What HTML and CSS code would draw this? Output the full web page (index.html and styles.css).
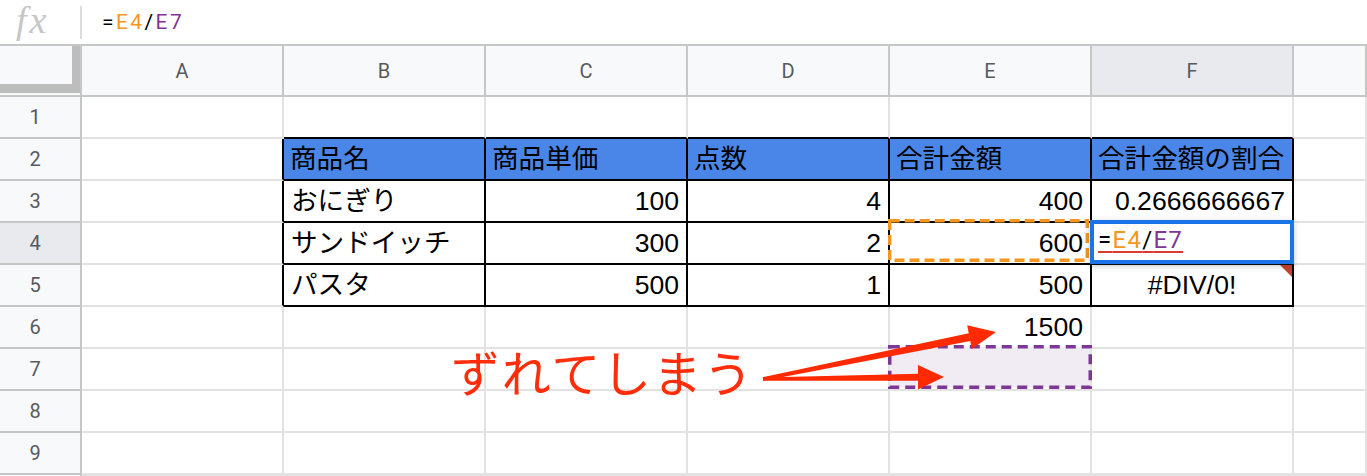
FILE: index.html
```html
<!DOCTYPE html>
<html lang="ja">
<head>
<meta charset="utf-8">
<title>Sheet</title>
<link rel="stylesheet" href="styles.css">
</head>
<body>
<div class="formula-bar">
  <span class="fx">fx</span>
  <span class="sep"></span>
  <span class="formula">=<span class="ref-a">E4</span>/<span class="ref-b">E7</span></span>
</div>
<div class="sheet">
  <div class="corner"><div class="freeze"></div></div>
  <div class="ch">A</div><div class="ch">B</div><div class="ch">C</div><div class="ch">D</div><div class="ch">E</div><div class="ch ch-sel">F</div><div class="ch"></div>

  <div class="rh">1</div>
  <div class="c"></div><div class="c bb"></div><div class="c bb"></div><div class="c bb"></div><div class="c bb"></div><div class="c bb"></div><div class="c"></div>

  <div class="rh">2</div>
  <div class="c br"></div>
  <div class="c t blue">商品名</div><div class="c t blue">商品単価</div><div class="c t blue">点数</div><div class="c t blue">合計金額</div><div class="c t blue">合計金額の割合</div>
  <div class="c"></div>

  <div class="rh">3</div>
  <div class="c br"></div>
  <div class="c t">おにぎり</div><div class="c t num">100</div><div class="c t num">4</div><div class="c t num">400</div><div class="c t num">0.2666666667</div>
  <div class="c"></div>

  <div class="rh rh-sel">4</div>
  <div class="c br"></div>
  <div class="c t">サンドイッチ</div><div class="c t num">300</div><div class="c t num">2</div><div class="c t num">600</div><div class="c t"></div>
  <div class="c"></div>

  <div class="rh">5</div>
  <div class="c br"></div>
  <div class="c t">パスタ</div><div class="c t num">500</div><div class="c t num">1</div><div class="c t num">500</div><div class="c t ctr err-cell">#DIV/0!<span class="err"></span></div>
  <div class="c"></div>

  <div class="rh">6</div>
  <div class="c"></div><div class="c"></div><div class="c"></div><div class="c"></div><div class="c num">1500</div><div class="c"></div><div class="c"></div>

  <div class="rh">7</div>
  <div class="c"></div><div class="c"></div><div class="c"></div><div class="c"></div><div class="c"></div><div class="c"></div><div class="c"></div>

  <div class="rh">8</div>
  <div class="c"></div><div class="c"></div><div class="c"></div><div class="c"></div><div class="c"></div><div class="c"></div><div class="c"></div>

  <div class="rh">9</div>
  <div class="c"></div><div class="c"></div><div class="c"></div><div class="c"></div><div class="c"></div><div class="c"></div><div class="c"></div>

  <div class="rh rh-cut"></div>
  <div class="c"></div><div class="c"></div><div class="c"></div><div class="c"></div><div class="c"></div><div class="c"></div><div class="c"></div>

  <svg class="sel-orange" width="201" height="43" viewBox="0 0 201 43">
    <rect x="1.7" y="1.7" width="197.6" height="39.6" fill="none" stroke="#f6961e" stroke-width="3.4" stroke-dasharray="10 5"/>
  </svg>
  <svg class="sel-purple" width="204" height="44" viewBox="0 0 204 44">
    <rect x="1.75" y="1.75" width="200.5" height="40.5" fill="#f1ecf4" stroke="#7e3794" stroke-width="3.5" stroke-dasharray="10 6"/>
  </svg>
  <div class="editor"><span class="edit-text">=<span class="ref-a">E4</span>/<span class="ref-b">E7</span></span></div>

  <div class="note">ずれてしまう</div>
  <svg class="arrows" width="1367" height="430" viewBox="0 46 1367 430">
    <polygon points="762.6,377.2 968.8,333.3 970.4,341.1 763.4,380.8" fill="#ff2a00"/>
    <polygon points="996,332 967.2,325.2 971.8,349" fill="#ff2a00"/>
    <polygon points="763,377.4 919,373.8 919,380.8 763,380.8" fill="#ff2a00"/>
    <polygon points="944,377 918,365 918,389.5" fill="#ff2a00"/>
  </svg>
</div>
</body>
</html>
```

FILE: styles.css
```css
html, body {
  margin: 0;
  padding: 0;
}
body {
  width: 1367px;
  height: 476px;
  overflow: hidden;
  background: #ffffff;
  font-family: "Liberation Sans", Arial, "Noto Sans CJK JP", sans-serif;
  color: #000;
}

.formula-bar {
  height: 44px;
  display: flex;
  align-items: center;
}
.fx {
  width: 80px;
  box-sizing: border-box;
  padding-left: 16px;
  padding-bottom: 5px;
  font-family: "Liberation Serif", "DejaVu Serif", serif;
  font-style: italic;
  font-size: 38px;
  line-height: 38px;
  letter-spacing: 3px;
  color: #c6c6c6;
}
.sep {
  width: 2px;
  height: 33px;
  background: #dadce0;
}
.formula {
  margin-left: 20px;
  font-family: Roboto, "Liberation Sans", sans-serif;
  font-size: 21px;
  letter-spacing: 2.4px;
  color: #000;
}
.ref-a { color: #f6961e; }
.ref-b { color: #7e3794; }

.sheet {
  position: relative;
  border-top: 2px solid #c4c7c5;
  display: grid;
  grid-template-columns: 82px repeat(6, 202px) 73px;
  grid-template-rows: 51px repeat(9, 42px) 1px;
}

.corner {
  box-sizing: border-box;
  background: #f8f9fa;
  border-right: 2px solid #c4c7c5;
  border-bottom: 2px solid #c4c7c5;
}
.freeze {
  box-sizing: border-box;
  width: 80px;
  height: 47px;
  border-right: 8px solid #bdbdbd;
  border-bottom: 9px solid #bdbdbd;
}

.ch, .rh {
  box-sizing: border-box;
  background: #f8f9fa;
  border-right: 2px solid #c4c7c5;
  border-bottom: 2px solid #c4c7c5;
  display: flex;
  align-items: center;
  justify-content: center;
  font-family: Roboto, "Liberation Sans", sans-serif;
  font-size: 20px;
  color: #575a5e;
}
.rh { padding-right: 10px; }
.rh-cut { border-bottom: 0; }
.ch-sel, .rh-sel { background: #e8eaed; }

.c {
  box-sizing: border-box;
  border-right: 2px solid #e2e2e2;
  border-bottom: 2px solid #e2e2e2;
  padding: 0 7px;
  font-size: 26.6px;
  line-height: 40px;
  white-space: nowrap;
  overflow: hidden;
}
.num { text-align: right; }
.ctr { text-align: center; }
.bb { border-bottom-color: #000; }
.br { border-right-color: #000; }
.t { border-right-color: #000; border-bottom-color: #000; }
.blue { background: #4a86e8; padding-left: 6px; }

.err-cell { position: relative; }
.err {
  position: absolute;
  top: 0;
  right: 0;
  width: 0;
  height: 0;
  border-top: 12px solid #c5412b;
  border-left: 12px solid transparent;
}

.sel-orange {
  position: absolute;
  left: 888px;
  top: 173px;
}
.sel-purple {
  position: absolute;
  left: 888px;
  top: 299px;
}
.editor {
  position: absolute;
  left: 1090px;
  top: 174px;
  width: 204px;
  height: 44px;
  box-sizing: border-box;
  border: 4px solid #1a73e8;
  background: #fff;
  box-shadow: 0 2px 6px rgba(60, 64, 67, 0.3);
  padding-left: 4px;
  font-family: Roboto, "Liberation Sans", sans-serif;
  font-size: 24px;
  line-height: 33px;
  letter-spacing: 1.3px;
  white-space: nowrap;
}
.edit-text {
  text-decoration: underline;
  text-decoration-color: #db3b2c;
  text-decoration-thickness: 2px;
  text-underline-offset: 3px;
}

.note {
  position: absolute;
  left: 451px;
  top: 300px;
  font-family: "Noto Sans CJK JP", sans-serif;
  font-size: 49px;
  line-height: 49px;
  letter-spacing: 1.8px;
  color: #ff2d0a;
  white-space: nowrap;
}
.arrows {
  position: absolute;
  left: 0;
  top: 0;
  pointer-events: none;
}
```
